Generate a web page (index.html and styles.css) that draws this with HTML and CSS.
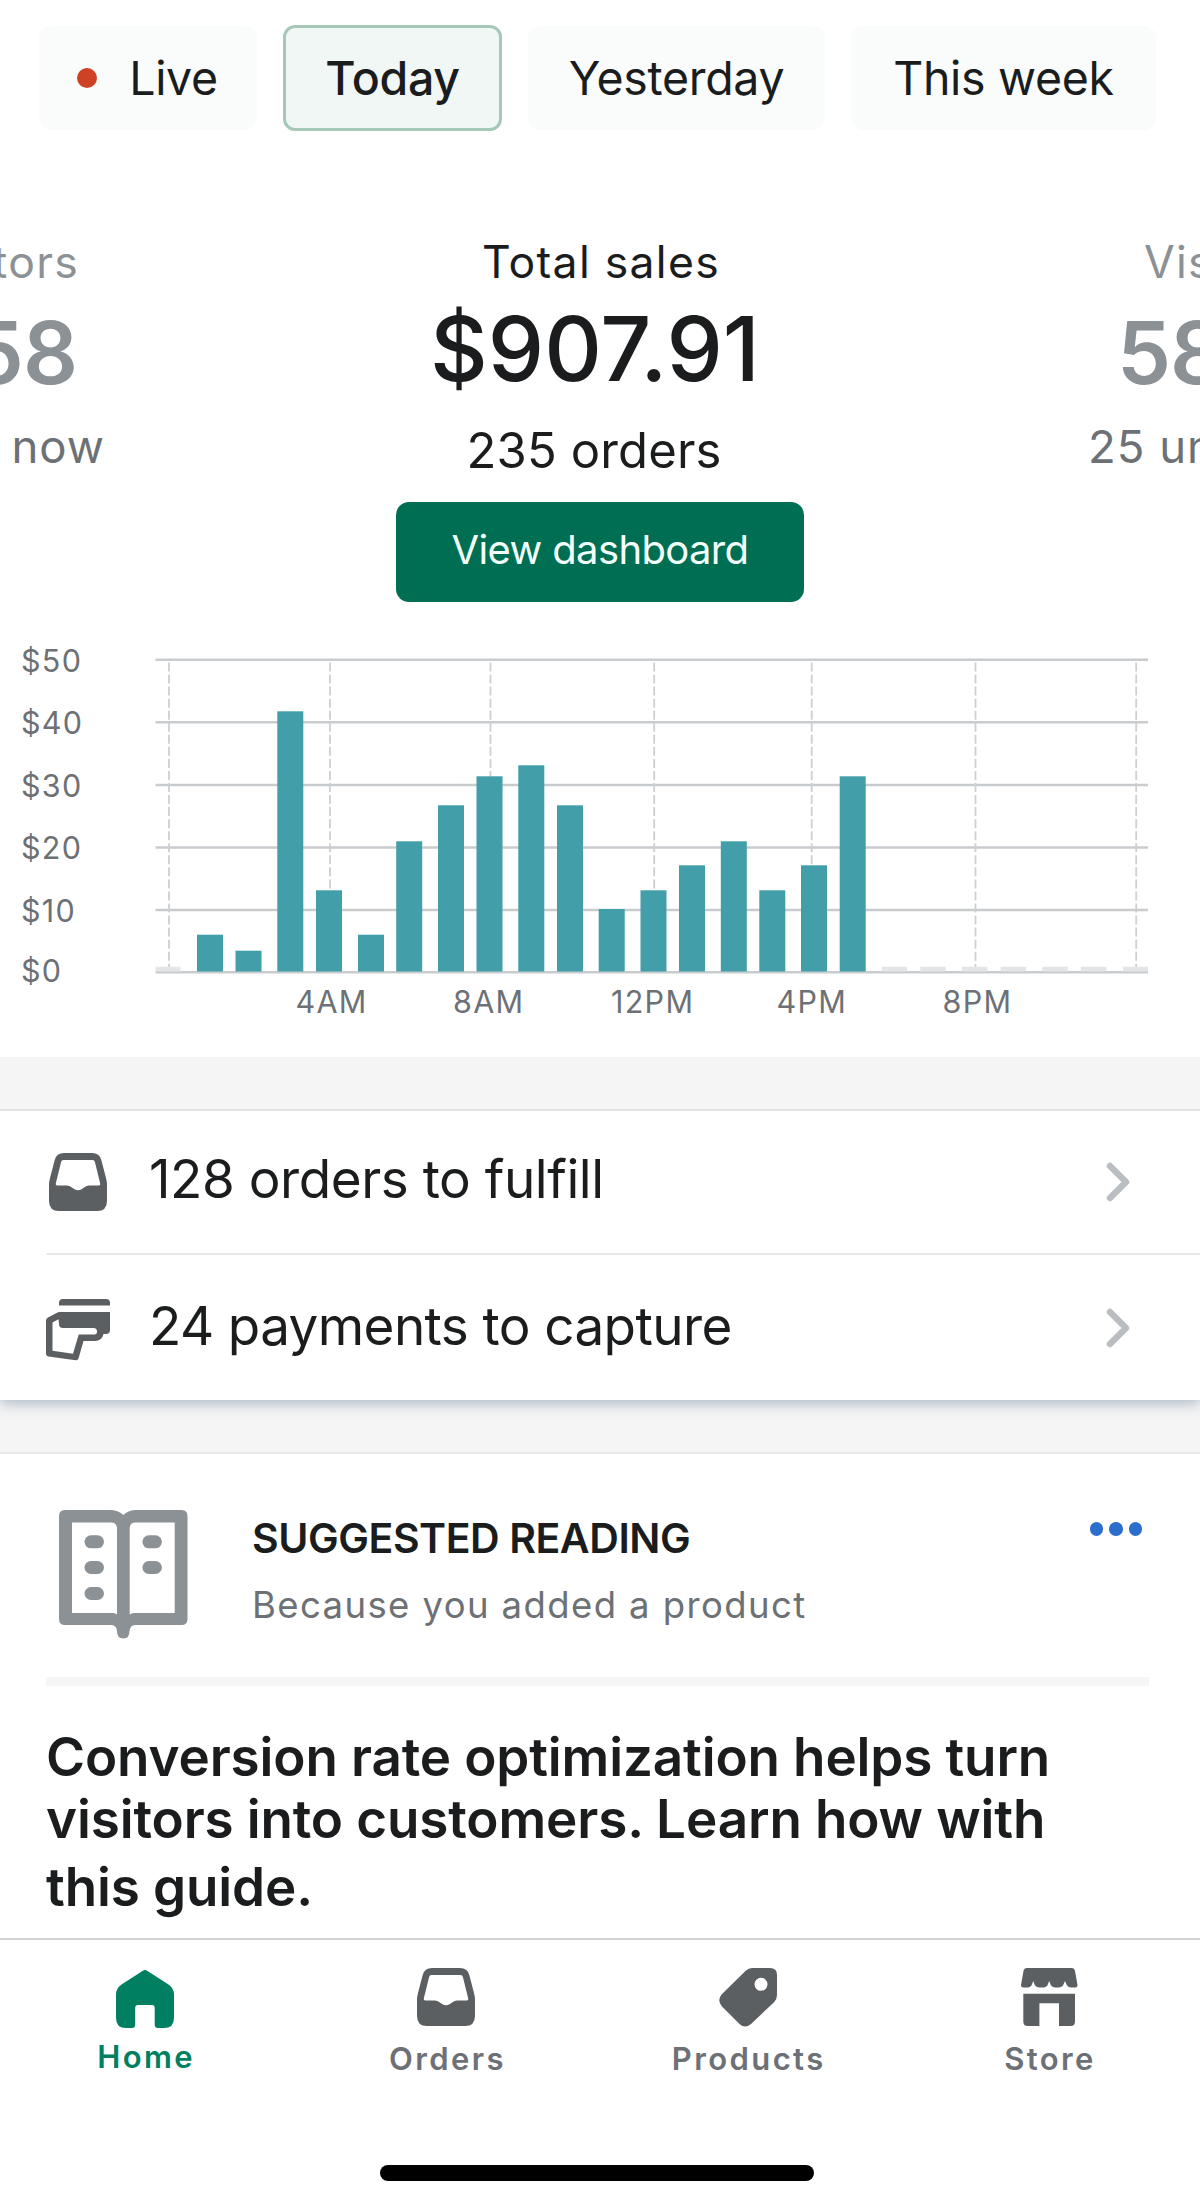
FILE: index.html
```
<!DOCTYPE html>
<html lang="en">
<head>
  <meta charset="UTF-8">
  <meta name="viewport" content="width=device-width, initial-scale=1.0">
  <title>Store Home</title>
  <link rel="stylesheet" href="styles.css">
</head>
<body>

  <!-- Period filter -->
  <div class="periods">
    <button class="period live"><span class="live-dot"></span>Live</button>
    <button class="period today active">Today</button>
    <button class="period yesterday">Yesterday</button>
    <button class="period week">This week</button>
  </div>

  <!-- Stats carousel -->
  <div class="stats">
    <div class="stat side prev">
      <div class="label">Visitors</div>
      <div class="value">58</div>
      <div class="sub">right now</div>
    </div>
    <div class="stat main">
      <div class="label">Total sales</div>
      <div class="value">$907.91</div>
      <div class="sub">235 orders</div>
      <button class="dashboard-btn">View dashboard</button>
    </div>
    <div class="stat side next">
      <div class="label">Visitors</div>
      <div class="value">58</div>
      <div class="sub">25 unfulfilled</div>
    </div>
  </div>

  <!-- Sales chart -->
  <svg class="chart" width="1200" height="455" viewBox="0 0 1200 455">
    <g class="grid">
      <path d="M155.5 57.7H1148M155.5 120.2H1148M155.5 183H1148M155.5 245.5H1148M155.5 308H1148M155.5 370.3H1148"/>
    </g>
    <g class="ticks">
      <path d="M169 60.5V365"/>
      <path d="M330 60.5V365"/>
      <path d="M490.5 60.5V365"/>
      <path d="M654.2 60.5V365"/>
      <path d="M811.7 60.5V365"/>
      <path d="M975.5 60.5V365"/>
      <path d="M1136.2 60.5V365"/>
    </g>
    <g class="bars">
      <rect x="197" y="332.7" width="26" height="36.8"/>
      <rect x="235.5" y="348.7" width="26" height="20.8"/>
      <rect x="277.3" y="109.3" width="26" height="260.2"/>
      <rect x="316" y="288.3" width="26" height="81.2"/>
      <rect x="358" y="332.7" width="26" height="36.8"/>
      <rect x="396.2" y="239.3" width="26" height="130.2"/>
      <rect x="438" y="203.3" width="26" height="166.2"/>
      <rect x="476.5" y="174.3" width="26" height="195.2"/>
      <rect x="518.3" y="163.3" width="26" height="206.2"/>
      <rect x="557" y="203.3" width="26" height="166.2"/>
      <rect x="598.7" y="307" width="26" height="62.5"/>
      <rect x="640.5" y="288.3" width="26" height="81.2"/>
      <rect x="679" y="263.3" width="26" height="106.2"/>
      <rect x="720.8" y="239.3" width="26" height="130.2"/>
      <rect x="759.3" y="288.3" width="26" height="81.2"/>
      <rect x="801" y="263.3" width="26" height="106.2"/>
      <rect x="839.7" y="174.3" width="26" height="195.2"/>
    </g>
    <g class="empty">
      <rect x="155.5" y="364.7" width="25" height="4.8"/>
      <rect x="882" y="364.7" width="25" height="4.8"/>
      <rect x="920.3" y="364.7" width="25.5" height="4.8"/>
      <rect x="962" y="364.7" width="25.5" height="4.8"/>
      <rect x="1000.7" y="364.7" width="25.5" height="4.8"/>
      <rect x="1042.3" y="364.7" width="25.5" height="4.8"/>
      <rect x="1080.8" y="364.7" width="25.5" height="4.8"/>
      <rect x="1123" y="364.7" width="25" height="4.8"/>
    </g>
    <g class="axis">
      <text x="21" y="69.5">$50</text>
      <text x="21" y="132">$40</text>
      <text x="21" y="194.5">$30</text>
      <text x="21" y="257">$20</text>
      <text x="21" y="319.5">$10</text>
      <text x="21" y="379.5">$0</text>
      <text x="295.5" y="410.5">4AM</text>
      <text x="453" y="410.5">8AM</text>
      <text x="611" y="410.5">12PM</text>
      <text x="776.5" y="410.5">4PM</text>
      <text x="942.5" y="410.5">8PM</text>
    </g>
  </svg>

  <!-- Tasks -->
  <div class="tasks">
    <div class="task">
      <span class="task-icon">
        <svg width="58" height="58" viewBox="0 0 58 58"><path fill-rule="evenodd" d="M15 0H43Q50.5 0 52.3 7L57 25Q58 28.5 58 32V48Q58 58 48 58H10Q0 58 0 48V32Q0 28.5 1 25L5.7 7Q7.5 0 15 0ZM14.5 7Q12.6 7 12.1 9L6.8 30.5Q6.3 32.5 8.3 32.5H18Q20.5 32.5 22.5 34.2L25.5 36.2Q29 38.5 32.5 36.2L35.5 34.2Q37.5 32.5 40 32.5H49.7Q51.7 32.5 51.2 30.5L45.9 9Q45.4 7 43.5 7Z"/></svg>
      </span>
      <span class="task-text">128 orders to fulfill</span>
      <svg class="chevron" width="24" height="40" viewBox="0 0 24 40"><path d="M4 4L20 20L4 36"/></svg>
    </div>
    <div class="task">
      <span class="task-icon low">
        <svg width="64" height="62" viewBox="0 0 64 62"><path d="M17 0H60Q64 0 64 4V6.5H13V4Q13 0 17 0Z"/><path fill-rule="evenodd" d="M13.5 13H64V31Q64 35 60 35H57.5Q56 42 49 42H37.5L32.5 59.5Q31.8 61.5 29.8 61.2L2.5 57.5Q0 57.2 0 54.7V21.5Q0 19.5 2 18.5L11 13.7Q12.2 13 13.5 13ZM12.5 20.3L6.5 23.5V51.8L27 54.8L32.7 35.5H48.5Q51 35.5 51 32.5Q51 29 47.5 29H17Q13 29 13 25Z"/></svg>
      </span>
      <span class="task-text">24 payments to capture</span>
      <svg class="chevron" width="24" height="40" viewBox="0 0 24 40"><path d="M4 4L20 20L4 36"/></svg>
    </div>
  </div>

  <!-- Suggested reading card -->
  <div class="card">
    <div class="card-head">
      <svg class="book" width="129" height="129" viewBox="0 0 129 129">
        <path fill-rule="evenodd" d="M6 0H51Q59 0 64.3 5Q69.5 0 77.5 0H122.5Q128.5 0 128.5 6V109Q128.5 115 122.5 115H76Q71 115.5 70.5 121Q70.5 128.5 64.3 128.5Q58 128.5 58 121Q57.5 115.5 52.5 115H6Q0 115 0 109V6Q0 0 6 0ZM13 12.5V103H54Q56.5 103 58 104.5V18Q57.5 13 52.5 12.5ZM76 12.5Q71 13 70.7 18V104.5Q72.5 103 75 103H115.7V12.5Z"/>
        <rect x="25.5" y="25.3" width="19.5" height="13" rx="6.5"/>
        <rect x="25.5" y="51" width="19.5" height="13" rx="6.5"/>
        <rect x="25.5" y="77" width="19.5" height="13" rx="6.5"/>
        <rect x="83.4" y="25.3" width="19.5" height="13" rx="6.5"/>
        <rect x="83.4" y="51" width="19.5" height="13" rx="6.5"/>
      </svg>
      <div class="card-titles">
        <h3>SUGGESTED READING</h3>
        <p>Because you added a product</p>
      </div>
      <div class="more"><span></span><span></span><span></span></div>
    </div>
    <h2>Conversion rate optimization helps turn<br>visitors into customers. Learn how with<br><span class="last-line">this guide.</span></h2>
  </div>

  <!-- Bottom navigation -->
  <div class="tabbar">
    <div class="tab active">
      <svg width="58" height="60" viewBox="0 -2 58 60"><path d="M26.5 0.9Q29 -0.8 31.5 0.9L52.5 14.5Q58 18.5 58 24.5V48Q58 58 48 58H42Q38.7 58 38.7 54.5V38Q38.7 35 36 35H22Q19.2 35 19.2 38V54.5Q19.2 58 16 58H10Q0 58 0 48V24.5Q0 18.5 5.5 14.5Z"/></svg>
      <span>Home</span>
    </div>
    <div class="tab">
      <svg width="58" height="60" viewBox="0 0 58 60"><path fill-rule="evenodd" d="M15 0H43Q50.5 0 52.3 7L57 25Q58 28.5 58 32V48Q58 58 48 58H10Q0 58 0 48V32Q0 28.5 1 25L5.7 7Q7.5 0 15 0ZM14.5 7Q12.6 7 12.1 9L6.8 30.5Q6.3 32.5 8.3 32.5H18Q20.5 32.5 22.5 34.2L25.5 36.2Q29 38.5 32.5 36.2L35.5 34.2Q37.5 32.5 40 32.5H49.7Q51.7 32.5 51.2 30.5L45.9 9Q45.4 7 43.5 7Z"/></svg>
      <span>Orders</span>
    </div>
    <div class="tab">
      <svg width="58" height="60" viewBox="0 0 58 60"><path fill-rule="evenodd" d="M33 0H51Q58 0 58 7V27Q58 31 55.3 34L32 56Q26 61 20.5 56L3 38.5Q-2.5 32 3 26L27 2.5Q29.5 0 33 0ZM42 9.8A6.5 6.5 0 1 0 42 22.8A6.5 6.5 0 1 0 42 9.8Z"/></svg>
      <span>Products</span>
    </div>
    <div class="tab">
      <svg width="57" height="60" viewBox="0 0 57 60"><path d="M6 0H50.5Q53.5 0 54 3L56.5 17Q56.5 19.5 54 19.5H50Q47.5 19.5 46 17.5L44 13L42 17.5Q40 19.5 38 19.5H34Q32 19.5 30 17.5L28.2 13L26.4 17.5Q24.5 19.5 22.5 19.5H18.5Q16 19.5 14 17.5L12.2 13L10.5 17.5Q9 19.5 7 19.5H2.5Q0 19.5 0 17L2.5 3Q3 0 6 0Z"/><path d="M2.3 25.7H54V53.5Q54 58 49.5 58H38V35.3H18.4V58H6.8Q2.3 58 2.3 53.5Z"/></svg>
      <span>Store</span>
    </div>
  </div>
  <div class="home-indicator"></div>

</body>
</html>
```
FILE: styles.css
```
/* Base styling */
* {
  margin: 0;
  padding: 0;
  box-sizing: border-box;
  font-family: Inter, "Liberation Sans", sans-serif;
}

body {
  width: 1200px;
  height: 2207px;
  background-color: #fff;
  color: #1a1c1d;
  display: flex;
  flex-direction: column;
  overflow: hidden;
}

button {
  border: none;
  color: inherit;
  cursor: pointer;
}

svg {
  display: block;
  flex-shrink: 0;
}

/* Period filter */
.periods {
  display: flex;
  align-items: center;
  gap: 26px;
  height: 131px;
  padding: 25px 0 0 39px;
}

.period {
  display: flex;
  align-items: center;
  justify-content: center;
  height: 104px;
  border-radius: 12px;
  background-color: #fafcfb;
  font-size: 46.5px;
  letter-spacing: -0.3px;
  white-space: nowrap;
}

.live {
  width: 218px;
  padding-right: 1px;
  gap: 32px;
}

.live-dot {
  width: 20px;
  height: 20px;
  border-radius: 50%;
  background-color: #ce4125;
}

.today {
  width: 219px;
}

.yesterday {
  width: 297px;
}

.week {
  width: 305px;
}

.period.active {
  height: 106px;
  border: 3px solid #a5c8b9;
  background-color: #f1f7f5;
  font-weight: 500;
}

/* Stats carousel */
.stats {
  display: flex;
  justify-content: space-between;
  height: 471px;
  padding-top: 104px;
  white-space: nowrap;
  overflow: hidden;
}

.stat .label {
  font-size: 44.5px;
  line-height: 54px;
  letter-spacing: 1.3px;
}

.main {
  display: flex;
  flex-direction: column;
  align-items: center;
  width: 408px;
}

.main .label {
  padding-left: 2px;
}

.main .value {
  margin-top: 12px;
  margin-right: 10px;
  font-size: 89.5px;
  font-weight: 500;
  line-height: 96px;
}

.main .sub {
  margin-top: 24px;
  margin-right: 12px;
  font-size: 49px;
  line-height: 60px;
  letter-spacing: 0.15px;
}

.dashboard-btn {
  width: 408px;
  height: 100px;
  margin-top: 21px;
  padding-bottom: 6px;
  border-radius: 13px;
  background-color: #006e52;
  color: #f3fffb;
  font-size: 40px;
  letter-spacing: -0.64px;
}

.side {
  width: 110px;
  color: #8c9196;
}

.side .value {
  margin-top: 16px;
  font-size: 86px;
  font-weight: 600;
  line-height: 96px;
  letter-spacing: -1px;
}

.side .sub {
  margin-top: 16px;
  font-size: 45.5px;
  line-height: 60px;
  letter-spacing: 1px;
  color: #6d7175;
}

.prev {
  display: flex;
  flex-direction: column;
  align-items: flex-end;
}

.prev .label {
  margin-right: 31px;
}

.prev .value {
  margin-right: 33px;
}

.prev .sub {
  margin-right: 5px;
}

.next .label {
  padding-left: 54px;
}

.next .value {
  padding-left: 27px;
}

.next .sub {
  margin-left: -2px;
}

/* Sales chart */
.chart .grid {
  fill: none;
  stroke: #c9cccf;
  stroke-width: 2.4;
}

.chart .ticks {
  fill: none;
  stroke: #cdcfd1;
  stroke-width: 1.8;
  stroke-dasharray: 9 3.05;
}

.chart .bars {
  fill: #429ea9;
}

.chart .empty {
  fill: #e3e5e6;
}

.chart .axis {
  fill: #6d7175;
  font-size: 30.5px;
  letter-spacing: 1.3px;
}

/* Tasks */
.tasks {
  position: relative;
  margin-top: 52px;
  border-top: 2px solid #e1e3e5;
  background-color: #fff;
  box-shadow: 0 -52px 0 #f5f5f5, 0 4px 13px rgba(84, 104, 135, 0.42), 0 52px 0 #f5f5f5;
}

.task {
  display: flex;
  align-items: center;
  height: 142px;
  margin-left: 46px;
  padding-right: 70px;
}

.task + .task {
  height: 147px;
  border-top: 2px solid #e6e8ea;
}

.task-icon {
  display: flex;
  justify-content: center;
  width: 64px;
  margin-right: 39px;
  fill: #5c5f62;
}

.task-icon.low {
  padding-top: 4px;
}

.task-text {
  flex: 1;
  padding-bottom: 6px;
  font-size: 53px;
  line-height: 62px;
  letter-spacing: -0.45px;
}

.task + .task .task-text {
  padding-bottom: 4px;
  letter-spacing: -0.6px;
}

.chevron {
  fill: none;
  stroke: #babec3;
  stroke-width: 6.5;
  stroke-linecap: round;
  stroke-linejoin: round;
}

/* Suggested reading card */
.card {
  height: 486px;
  margin-top: 52px;
  padding: 0 51px 0 46px;
  border-top: 2px solid #e8e9ea;
}

.card-head {
  display: flex;
  height: 232px;
  padding: 56px 7px 0 13px;
  border-bottom: 9px solid #f6f6f7;
}

.book {
  fill: #8c9196;
}

.card-titles {
  flex: 1;
  padding: 3px 0 0 64px;
}

.card-titles h3 {
  font-size: 41px;
  font-weight: 600;
  line-height: 50px;
  letter-spacing: -0.44px;
}

.card-titles p {
  margin-top: 19px;
  font-size: 36.5px;
  line-height: 46px;
  letter-spacing: 1.4px;
  color: #6d7175;
}

.more {
  display: flex;
  gap: 6px;
  padding-top: 12px;
}

.more span {
  width: 13.5px;
  height: 13.5px;
  border-radius: 50%;
  background-color: #2c6ecb;
}

.card h2 {
  padding-top: 40px;
  font-size: 53px;
  font-weight: 600;
  line-height: 62px;
  letter-spacing: -0.13px;
  white-space: nowrap;
}

.last-line {
  display: block;
  line-height: 74px;
}

/* Bottom navigation */
.tabbar {
  display: flex;
  height: 227px;
  padding-top: 28px;
  border-top: 2px solid #cfd1d3;
  background-color: #fff;
  overflow: hidden;
}

.tab {
  display: flex;
  flex-direction: column;
  align-items: center;
  width: 301.3px;
  flex-shrink: 0;
  fill: #5c5f62;
  color: #6d7175;
}

.tab:first-child {
  margin-left: -5.5px;
}

.tab span {
  margin-top: 11px;
  padding-left: 2px;
  font-size: 31px;
  font-weight: 600;
  line-height: 40px;
  letter-spacing: 2.4px;
}

.tab.active {
  fill: #008060;
  color: #008060;
}

.tab.active span {
  margin-top: 9px;
}

.home-indicator {
  width: 434px;
  height: 16px;
  margin-left: 380px;
  border-radius: 8px;
  background-color: #000;
}
```
